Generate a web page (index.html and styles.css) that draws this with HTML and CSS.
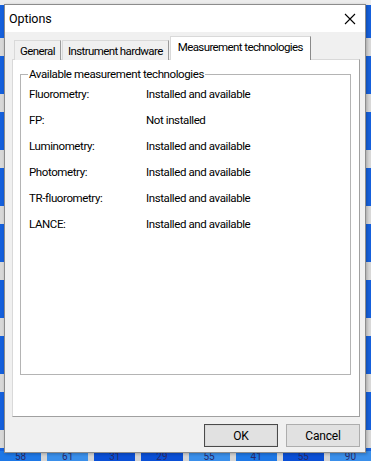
FILE: index.html
```html
<!DOCTYPE html>
<html>
<head>
<meta charset="utf-8">
<link rel="stylesheet" href="styles.css">
</head>
<body>
<div class="desk">
  <div class="bgcells">
    <span class="c c1">58</span><span class="c c2">61</span><span class="c c3">31</span><span class="c c3">29</span><span class="c c2">55</span><span class="c c1">41</span><span class="c c3">55</span><span class="c c2">90</span>
  </div>
  <div class="dialog">
    <div class="titlebar">
      <span class="title">Options</span>
      <svg class="close" width="12" height="12" viewBox="0 0 12 12"><path d="M1 1 L11 11 M11 1 L1 11" stroke="#000" stroke-width="1.1" fill="none"/></svg>
    </div>
    <div class="body">
      <div class="tabs">
        <div class="tab">General</div>
        <div class="tab">Instrument hardware</div>
        <div class="tab active">Measurement technologies</div>
      </div>
      <div class="panel">
        <fieldset class="group">
          <legend>Available measurement technologies</legend>
          <div class="row"><span class="lbl">Fluorometry:</span><span>Installed and available</span></div>
          <div class="row"><span class="lbl">FP:</span><span>Not installed</span></div>
          <div class="row"><span class="lbl">Luminometry:</span><span>Installed and available</span></div>
          <div class="row"><span class="lbl">Photometry:</span><span>Installed and available</span></div>
          <div class="row"><span class="lbl">TR-fluorometry:</span><span>Installed and available</span></div>
          <div class="row"><span class="lbl">LANCE:</span><span>Installed and available</span></div>
        </fieldset>
      </div>
      <div class="buttons">
        <button class="btn default">OK</button>
        <button class="btn">Cancel</button>
      </div>
    </div>
  </div>
</div>
</body>
</html>
```
FILE: styles.css
```css
html, body {
  margin: 0;
  padding: 0;
}
body {
  width: 371px;
  height: 461px;
  overflow: hidden;
  font-family: Roboto, "Liberation Sans", sans-serif;
  font-size: 11.5px;
  letter-spacing: -0.4px;
  color: #000;
  background:
    linear-gradient(#ececec, #ececec) 0 0 / 371px 5px no-repeat,
    repeating-linear-gradient(180deg, #1560dc 0 38px, #d8d8d8 38px 56px);
}
.desk {
  position: relative;
  width: 371px;
  height: 461px;
}
.bgcells {
  position: absolute;
  left: 0;
  top: 451px;
  width: 371px;
  height: 10px;
  display: flex;
  gap: 6px;
  background: #d4d4d4;
}
.c {
  flex: 1;
  font-size: 10px;
  letter-spacing: 0;
  line-height: 12px;
  text-align: center;
  color: #2a2a6a;
}
.c1 { background: #1e78e6; }
.c2 { background: #3a8fea; }
.c3 { background: #0a4fd6; }
.dialog {
  position: absolute;
  left: 4px;
  top: 4px;
  width: 360px;
  height: 447px;
  border: 1px solid #8c8c8c;
  background: #f0f0f0;
  display: flex;
  flex-direction: column;
  box-shadow: 1px 1px 3px rgba(0,0,0,0.25);
}
.titlebar {
  height: 27px;
  background: #fff;
  display: flex;
  align-items: center;
  justify-content: space-between;
  padding: 0 9px 0 4px;
}
.title {
  font-size: 12.5px;
  letter-spacing: -0.1px;
}
.close {
  display: block;
}
.body {
  flex: 1;
  display: flex;
  flex-direction: column;
  padding: 5px 5px 0 7px;
}
.tabs {
  display: flex;
  align-items: flex-end;
  height: 23px;
  padding-left: 2px;
  position: relative;
  z-index: 1;
  margin-bottom: -1px;
  letter-spacing: -0.6px;
}
.tab {
  height: 20px;
  padding: 0 5px 0 5px;
  line-height: 20px;
  white-space: nowrap;
  border: 1px solid #d9d9d9;
  border-bottom: none;
  border-right: 1px solid #9a9a9a;
  background: #f0f0f0;
  margin-right: 1px;
  box-sizing: border-box;
}
.tab.active {
  height: 24px;
  line-height: 20px;
  padding: 0 7px;
  background: #fff;
  border-color: #d9d9d9;
  border-right: 1px solid #8a8a8a;
}
.panel {
  height: 358px;
  background: #fff;
  border: 1px solid #d9d9d9;
  border-right-color: #a0a0a0;
  border-bottom-color: #a0a0a0;
  box-sizing: border-box;
  padding: 7px 8px 0 7px;
}
.group {
  margin: 0;
  height: 308px;
  box-sizing: border-box;
  border: 1px solid #b4b4b4;
  padding: 0 0 0 8px;
}
.group legend {
  padding: 0 1px;
  margin-left: -1px;
  line-height: 14px;
}
.row {
  display: flex;
  height: 26px;
  line-height: 26px;
}
.lbl {
  width: 117px;
}
.buttons {
  display: flex;
  justify-content: flex-end;
  gap: 8px;
  padding-top: 7px;
}
.btn {
  width: 74px;
  height: 23px;
  font-family: inherit;
  font-size: 12px;
  letter-spacing: -0.2px;
  background: #e1e1e1;
  border: 1px solid #adadad;
  padding: 0;
  color: #000;
}
.btn.default {
  border: 1px solid #4a4a4a;
  box-shadow: inset 0 0 0 1px #d8d8d8;
}
```
